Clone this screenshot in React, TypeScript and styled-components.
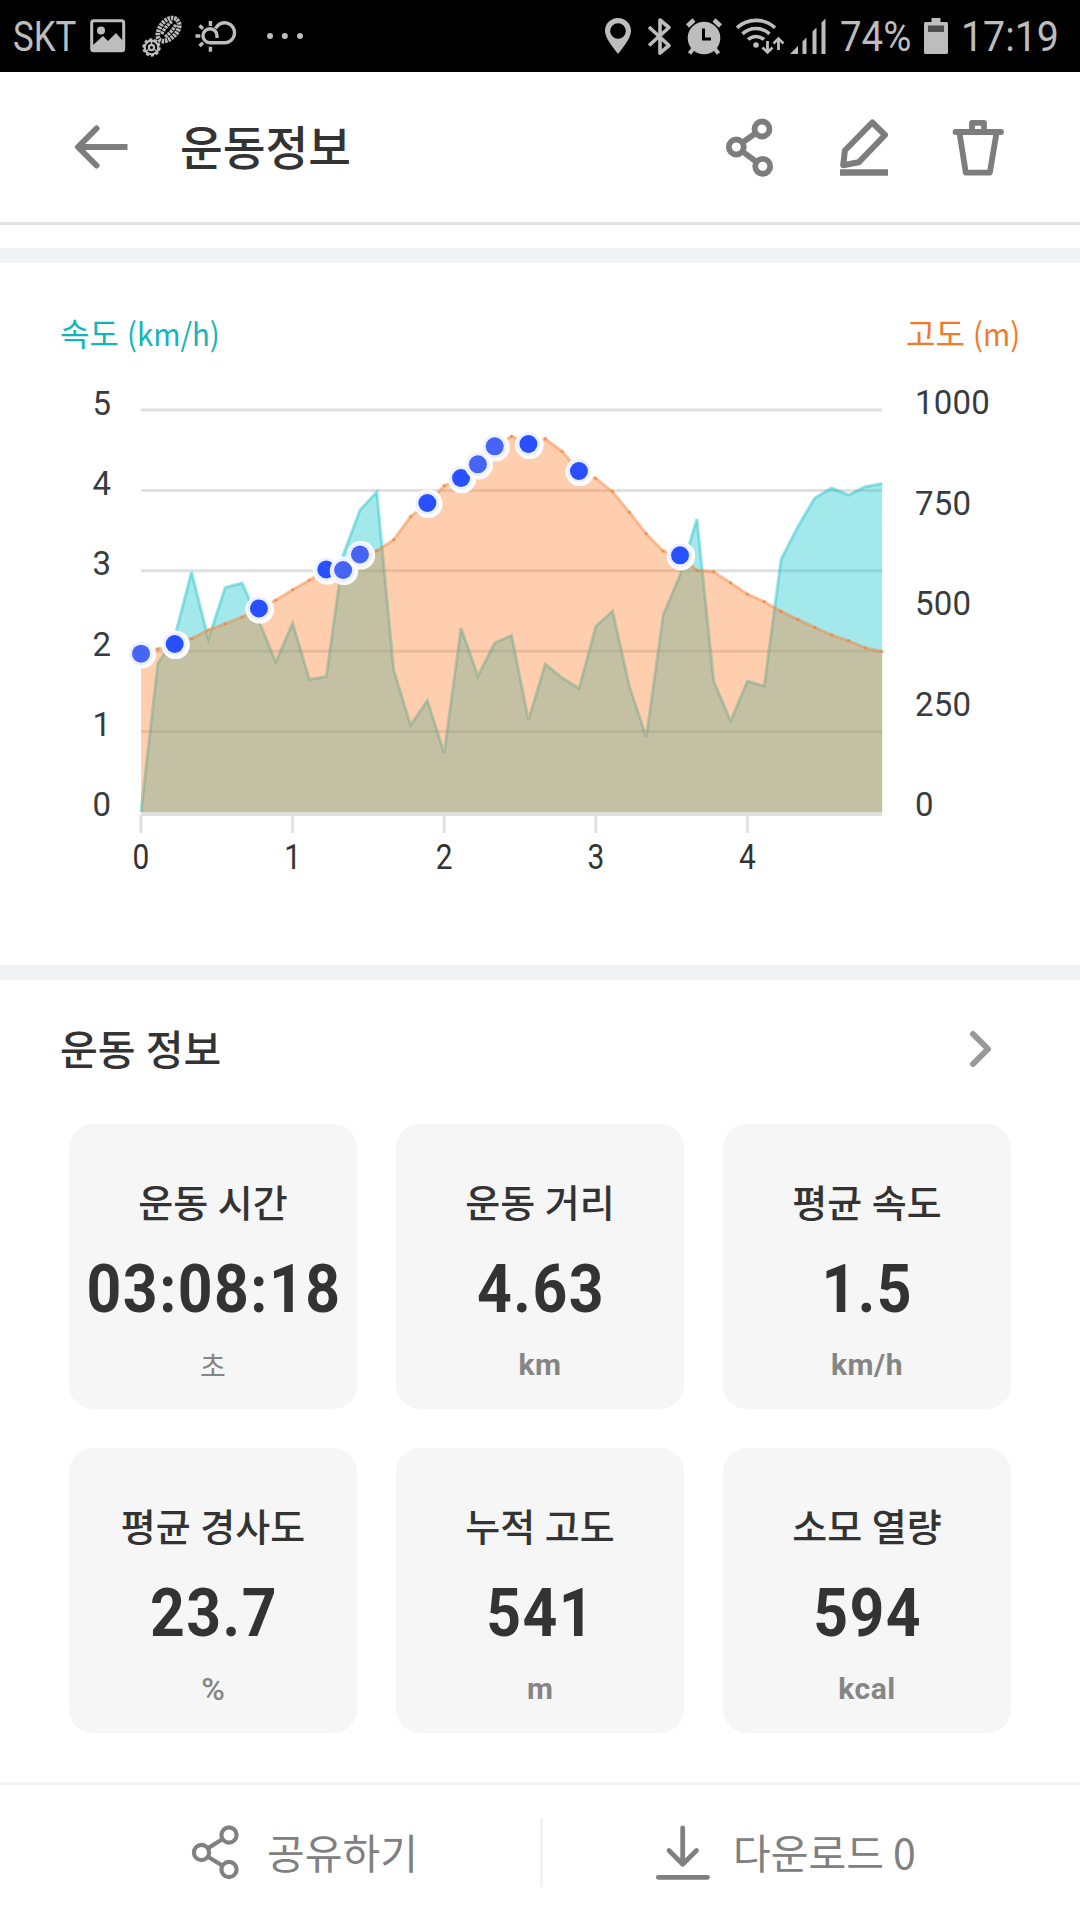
import React from "react";
import styled, { createGlobalStyle } from "styled-components";

const KR = '"Noto Sans CJK KR", "Noto Sans", sans-serif';
const ROBOTO = 'Roboto, "Noto Sans CJK KR", sans-serif';

const GlobalStyle = createGlobalStyle`
  * { box-sizing: border-box; }
  body { margin: 0; background: #fff; font-family: ${KR}; color: #333; }
  svg { display: block; flex: none; overflow: visible; }
`;

const Screen = styled.div`
  width: 1080px;
  height: 1920px;
  display: flex;
  flex-direction: column;
  overflow: hidden;
  background: #fff;
`;

/* ---------- status bar ---------- */

const StatusBar = styled.div`
  height: 72px;
  flex: none;
  display: flex;
  align-items: center;
  justify-content: space-between;
  padding: 0 22px 0 13px;
  background: #000;
  color: #bdbdbd;
`;

const StatusGroup = styled.div`
  display: flex;
  align-items: center;
  height: 72px;
`;

const StatusText = styled.span<{ $w: number; $scale: number }>`
  display: block;
  width: ${(p) => p.$w}px;
  padding-top: 2px;
  font: 400 42px/72px ${ROBOTO};
  white-space: nowrap;
  transform: scaleX(${(p) => p.$scale});
  transform-origin: left center;
`;

const Space = styled.span<{ $w: number }>`
  flex: none;
  width: ${(p) => p.$w}px;
`;

/* ---------- header ---------- */

const Header = styled.header`
  height: 153px;
  flex: none;
  display: flex;
  align-items: center;
  padding: 0 76px 0 75px;
  border-bottom: 3px solid #e2e2e2;
`;

const Title = styled.h1`
  margin: 0 auto 0 52px;
  padding-bottom: 4px;
  font: 500 46.5px/60px ${KR};
`;

const HeaderActions = styled.div`
  display: flex;
  align-items: center;
  gap: 65px;
`;

const Band = styled.div<{ $top?: number }>`
  height: 15px;
  flex: none;
  margin-top: ${(p) => p.$top ?? 0}px;
  background: #f1f2f4;
`;

/* ---------- chart ---------- */

const ChartSection = styled.section`
  height: 702px;
  flex: none;
  padding-top: 45px;
`;

const Legend = styled.div`
  height: 49px;
  display: flex;
  justify-content: space-between;
  padding: 0 60px 0 60px;
`;

const LegendLabel = styled.span<{ $color: string }>`
  display: flex;
  gap: 8px;
  font: 400 32px/48px ${KR};
  color: ${(p) => p.$color};
`;

const LegendUnit = styled.span<{ $w: number }>`
  width: ${(p) => p.$w}px;
  white-space: nowrap;
  transform: scaleX(0.92);
  transform-origin: left center;
`;

const AxisText = styled.text`
  font: 400 33px ${ROBOTO};
  fill: #373c40;
`;

const DistanceText = styled.text`
  font: 400 36px ${ROBOTO};
  fill: #333;
  text-anchor: middle;
`;

/* ---------- summary ---------- */

const SectionHead = styled.div`
  height: 144px;
  flex: none;
  display: flex;
  align-items: center;
  justify-content: space-between;
  padding: 0 88px 6px 60px;
`;

const SectionTitle = styled.h2`
  margin: 0;
  padding-bottom: 4px;
  font: 500 41px/56px ${KR};
  word-spacing: 1px;
`;

const CardGrid = styled.div`
  display: grid;
  grid-template-columns: repeat(3, 288px);
  grid-auto-rows: 285px;
  gap: 39px;
  padding: 0 69px;
`;

const Card = styled.div`
  display: flex;
  flex-direction: column;
  align-items: center;
  padding-top: 49px;
  border-radius: 24px;
  background: #f6f6f6;
`;

const CardLabel = styled.div`
  font: 500 38px/56px ${KR};
  word-spacing: 1px;
  white-space: nowrap;
`;

const CardValue = styled.div`
  margin-top: 21px;
  padding-left: 1.5px;
  font: 700 66px/80px ${ROBOTO};
  letter-spacing: 1.6px;
  white-space: nowrap;
  transform: scaleX(0.92);
`;

const CardUnit = styled.div<{ $unit: string }>`
  margin-top: 15px;
  font: ${(p) => (p.$unit === "초" ? `400 28px/40px ${KR}` : `700 30px/40px ${ROBOTO}`)};
  font-weight: ${(p) => (p.$unit === "초" ? 400 : p.$unit === "%" ? 500 : 700)};
  font-size: ${(p) => (p.$unit === "초" ? 28 : p.$unit === "%" ? 32 : 30)}px;
  color: #858585;
  letter-spacing: ${(p) => (p.$unit.length > 1 ? 0.5 : 0)}px;
`;

/* ---------- footer ---------- */

const Footer = styled.footer`
  height: 138px;
  flex: none;
  margin-top: 49px;
  display: flex;
  align-items: center;
  border-top: 3px solid #f1f2f2;
  color: #808080;
`;

const FooterButton = styled.div<{ $left: number; $width: number; $gap: number }>`
  width: ${(p) => p.$width}px;
  padding-left: ${(p) => p.$left}px;
  display: flex;
  align-items: center;
  gap: ${(p) => p.$gap}px;
  font: 400 41px/60px ${KR};
  white-space: nowrap;
`;

const FooterText = styled.span`
  padding-bottom: 4px;
`;

const Divider = styled.div`
  width: 3px;
  height: 69px;
  background: #f1f2f4;
`;

/* ---------- icons ---------- */

const FG = "#bdbdbd";

const PictureIcon = () => (
  <svg width="36" height="34" viewBox="0 0 36 34">
    <rect x="1.7" y="1.7" width="32" height="30" rx="2" fill="none" stroke={FG} strokeWidth="3" />
    <circle cx="11" cy="11.5" r="4" fill={FG} />
    <path d="M3 26 L13 17 L18 22 L26 14 L33 22 V31 H3Z" fill={FG} />
  </svg>
);

const BootIcon = () => (
  <svg width="41" height="41" viewBox="0 0 41 41" fill="none" stroke={FG}>
    <g transform="rotate(40 26 14)">
      <path
        d="M26 0.500C31.500 0.500 34.500 6 34.500 12C34.500 19 31 27 26 27C21 27 17.500 19 17.500 12C17.500 6 20.500 0.500 26 0.500Z"
        strokeWidth="4.600"
        strokeDasharray="2.400 0.900"
      />
      <path d="M23.500 5Q21.500 13 24 22M28.500 5Q30.500 13 28 22" strokeWidth="3.400" strokeDasharray="2.600 0.800" />
    </g>
    <circle cx="9.500" cy="31.500" r="6.800" strokeWidth="2.200" />
    <circle cx="9.500" cy="31.500" r="8.300" strokeWidth="1.800" strokeDasharray="3.200 2" />
    <circle cx="9.500" cy="31.500" r="2.600" strokeWidth="2.200" />
    <path d="M9.500 25V28M12.500 33.500l3 2M6.500 33.500l-3 2" strokeWidth="1.400" />
  </svg>
);

const WeatherIcon = () => (
  <svg width="42" height="32" viewBox="0 0 42 32" fill="none" stroke={FG} strokeWidth="3.400">
    <path d="M20.500 8.500A10 10 0 1 1 29.800 22.700H15A7 7 0 1 1 22 15.700V18" />
    <path d="M15.400 1V6M15.400 26.700V31.700M0.500 16H5.300M4.500 5.500L8 8.700M4.500 26L8 22.800" />
  </svg>
);

const MoreIcon = () => (
  <svg width="38" height="8" viewBox="0 0 38 8" fill={FG}>
    <circle cx="4" cy="4" r="3" />
    <circle cx="18.8" cy="4" r="3" />
    <circle cx="34" cy="4" r="3" />
  </svg>
);

const PinIcon = () => (
  <svg width="26" height="36" viewBox="0 0 26 36">
    <path
      fillRule="evenodd"
      fill={FG}
      d="M13 0C5.8 0 0 5.6 0 12.8C0 20 7 28 13 36C19 28 26 20 26 12.8C26 5.6 20.200 0 13 0ZM13 5.200a7.800 7.800 0 1 1 0 15.600a7.800 7.800 0 1 1 0-15.600Z"
    />
  </svg>
);

const BluetoothIcon = () => (
  <svg width="23" height="37" viewBox="0 0 23 37" fill="none" stroke={FG} strokeWidth="3.6" strokeLinejoin="round">
    <path d="M1 9 L21 27.500 L12 35 V2 L21 9.500 L1 27.500" />
  </svg>
);

const AlarmIcon = () => (
  <svg width="36" height="37" viewBox="0 0 36 37">
    <circle cx="18" cy="20" r="16.300" fill={FG} />
    <path d="M1.500 8 L8 2M34.500 8 L28 2" stroke={FG} strokeWidth="4.500" />
    <path d="M7 31L3.500 35.500M29 31l3.500 4.500" stroke={FG} strokeWidth="4" />
    <path d="M17.500 10.500V21H25" fill="none" stroke="#000" strokeWidth="3" />
  </svg>
);

const WifiIcon = () => (
  <svg width="48" height="37" viewBox="0 0 48 37" fill="none" stroke={FG} strokeWidth="3.600">
    <path d="M1 9.800 A28 28 0 0 1 39 9.800M6.500 15.800 A20 20 0 0 1 33.500 15.800M12 21.500 A12 12 0 0 1 28 21.500" />
    <circle cx="20" cy="27" r="2.800" fill={FG} stroke="none" />
    <path d="M31.500 23V34M42.500 32V21.500" strokeWidth="2.800" />
    <path d="M26.500 29.500L31.500 34.500L36.500 29.500M37.500 25.500L42.500 20.500L47.500 25.500" strokeWidth="2.600" />
  </svg>
);

const SignalIcon = () => (
  <svg width="36" height="36" viewBox="0 0 36 36" fill={FG}>
    <path d="M0 36L8 28V36ZM12.500 23.500L16.500 19.500V36H12.500ZM22.500 13.500L26.500 9.500V36H22.500ZM31.500 4.500L35.500 0.500V36H31.500Z" />
  </svg>
);

const BatteryIcon = () => (
  <svg width="24" height="36" viewBox="0 0 24 36">
    <path fill={FG} d="M7.500 0H16.500V4H22.500Q24 4 24 5.500V34.500Q24 36 22.500 36H1.500Q0 36 0 34.500V5.500Q0 4 1.500 4H7.500Z" />
    <rect x="4" y="7.500" width="16" height="6.500" fill="#4d4d4d" />
  </svg>
);

const BackIcon = () => (
  <svg width="53" height="44" viewBox="75 125 53 44" fill="none" stroke="#7d7d7d" strokeWidth="6" strokeLinejoin="round">
    <path d="M78 147H127.500" />
    <path d="M96.500 128.500L78 147L96.500 165.500" strokeLinecap="round" />
  </svg>
);

const HeaderShareIcon = () => (
  <svg width="48" height="60" viewBox="727 117 48 60" fill="none" stroke="#7d7d7d" strokeWidth="5.800">
    <circle cx="762" cy="129" r="7.500" />
    <circle cx="736.300" cy="147" r="7.500" />
    <circle cx="762.700" cy="166.300" r="7.500" />
    <path d="M742.500 142.500L755.800 133.200M742.500 151.500L756.500 161.800" />
  </svg>
);

const EditIcon = () => (
  <svg width="48" height="60" viewBox="840 117 48 60" fill="none" stroke="#7d7d7d" strokeWidth="6" strokeLinejoin="round">
    <path d="M872.300 122.500L885 135L858.700 162.300L843.200 165.200L844.900 150.500Z" />
    <path d="M840 172.500H888" strokeWidth="6.400" />
  </svg>
);

const TrashIcon = () => (
  <svg width="51" height="60" viewBox="953 117 51 60" fill="none" stroke="#7d7d7d" strokeWidth="5.800" strokeLinejoin="round">
    <path d="M955.500 132H1001" strokeLinecap="round" />
    <path d="M972 131V122.800H984V131" />
    <path d="M959.500 133L965.800 172.700H989.800L996.500 133" />
  </svg>
);

const ChevronIcon = () => (
  <svg width="22" height="36" viewBox="0 0 22 36" fill="none" stroke="#999" strokeWidth="6" strokeLinecap="round" strokeLinejoin="round">
    <path d="M3 3L18 18L3 33" />
  </svg>
);

const ShareIcon = () => (
  <svg width="47" height="54" viewBox="192 1826 47 54" fill="none" stroke="#808080" strokeWidth="4.200">
    <circle cx="229" cy="1835" r="7.600" />
    <circle cx="201.500" cy="1852.500" r="7.600" />
    <circle cx="229" cy="1869.500" r="7.600" />
    <path d="M208 1848.300L222.600 1839M208 1856.700L222.600 1865.700" />
  </svg>
);

const DownloadIcon = () => (
  <svg width="54" height="54" viewBox="656 1826 54 54" fill="none" stroke="#808080" strokeWidth="4.800" strokeLinecap="round" strokeLinejoin="round">
    <path d="M682.700 1828V1864M669 1850.500L682.700 1864.300L696.500 1850.500M658.300 1877.300H707.500" />
  </svg>
);

/* ---------- chart data, one sample per ninth of a kilometre ---------- */

const speed = [
  812, 663.7, 637, 572, 639, 587.5, 583, 621, 662, 623, 679.5, 676.6, 555, 510, 492, 670, 725, 700.5, 753, 628, 676,
  643, 635.3, 720, 664, 677.7, 688.5, 626.5, 611, 686.7, 737, 615, 575, 519, 681, 721, 681, 686, 559.3, 526.4,
  498, 488, 495, 486.7, 483.5,
];

const altitude = [
  653.7, 648.9, 644, 638.5, 630, 623.7, 617, 608.5, 600, 589.7, 580, 569.5, 570, 554.5, 550.8, 539.7, 516.5, 503,
  485.7, 478, 464.3, 446.3, 436.3, 444, 438.7, 451.3, 471, 478.3, 491.7, 512.3, 533.7, 551, 555.3, 570.3, 571.7,
  582.7, 594, 601.7, 611.3, 619.3, 627.4, 634.8, 640.7, 647.8, 651.5,
];

const markers: { i: number; soft?: boolean }[] = [
  { i: 0, soft: true },
  { i: 2 },
  { i: 7 },
  { i: 11 },
  { i: 12, soft: true },
  { i: 13, soft: true },
  { i: 17 },
  { i: 19 },
  { i: 20, soft: true },
  { i: 21, soft: true },
  { i: 23 },
  { i: 26 },
  { i: 32 },
];

const BASE = 812;
const LEFT = 141;
const KM = 151.6;
const xAt = (i: number) => LEFT + (i * KM) / 9;
const toLine = (ys: number[]) => ys.map((y, i) => `${xAt(i).toFixed(1)},${y}`).join(" ");
const RIGHT = xAt(speed.length - 1);
const toArea = (ys: number[]) => `${LEFT},${BASE} ${toLine(ys)} ${RIGHT},${BASE}`;

const Chart = () => (
  <svg width="1080" height="608" viewBox="0 357 1080 608">
    {[0, 1, 2, 3, 4, 5].map((n) => {
      const y = n === 0 ? 814 : BASE - n * 80.4;
      return <path key={n} d={`M${LEFT} ${y}H${RIGHT}`} stroke="#e0e0e0" strokeWidth={n === 0 ? 4 : 3} />;
    })}
    {[0, 1, 2, 3, 4].map((n) => (
      <path key={n} d={`M${LEFT + n * KM} 815V833`} stroke="#e0e0e0" strokeWidth="3" />
    ))}
    <polygon points={toArea(speed)} fill="rgba(24,200,207,0.4)" />
    <polyline points={toLine(speed)} fill="none" stroke="rgba(24,190,197,0.42)" strokeWidth="3" />
    <polygon points={toArea(altitude)} fill="rgba(255,120,32,0.36)" />
    <polyline points={toLine(altitude)} fill="none" stroke="rgba(245,130,60,0.45)" strokeWidth="3" />
    {altitude.map((y, i) => (
      <circle key={i} cx={xAt(i)} cy={y} r="1.600" fill="rgba(240,120,50,0.6)" />
    ))}
    {markers.map(({ i, soft }) => (
      <g key={i}>
        <circle cx={xAt(i) + 0.9} cy={altitude[i] + 0.8} r="14.300" fill="#fff" opacity={soft ? 0.9 : 1} />
        <circle cx={xAt(i)} cy={altitude[i]} r="11.800" fill="#ebefff" />
        <circle cx={xAt(i)} cy={altitude[i]} r="9" fill={soft ? "#4765f4" : "#2850ff"} />
      </g>
    ))}
    {[5, 4, 3, 2, 1, 0].map((n) => (
      <AxisText key={n} x="111" y={816 - n * 80.2} textAnchor="end">
        {n}
      </AxisText>
    ))}
    {[1000, 750, 500, 250, 0].map((n) => (
      <AxisText key={n} x="915" y={816 - (n / 250) * 100.4} letterSpacing="0.200">
        {n}
      </AxisText>
    ))}
    {[0, 1, 2, 3, 4].map((n) => (
      <DistanceText key={n} transform={`translate(${LEFT + n * KM} 869) scale(0.83 1)`}>
        {n}
      </DistanceText>
    ))}
  </svg>
);

const stats = [
  { label: "운동 시간", value: "03:08:18", unit: "초" },
  { label: "운동 거리", value: "4.63", unit: "km" },
  { label: "평균 속도", value: "1.5", unit: "km/h" },
  { label: "평균 경사도", value: "23.7", unit: "%" },
  { label: "누적 고도", value: "541", unit: "m" },
  { label: "소모 열량", value: "594", unit: "kcal" },
];

export default function App() {
  return (
    <Screen>
      <GlobalStyle />
      <StatusBar>
        <StatusGroup>
          <StatusText $w={77} $scale={0.83}>SKT</StatusText>
          <PictureIcon />
          <Space $w={16} />
          <BootIcon />
          <Space $w={12} />
          <WeatherIcon />
          <Space $w={29} />
          <MoreIcon />
        </StatusGroup>
        <StatusGroup>
          <PinIcon />
          <Space $w={17} />
          <BluetoothIcon />
          <Space $w={15} />
          <AlarmIcon />
          <Space $w={14} />
          <WifiIcon />
          <Space $w={6} />
          <SignalIcon />
          <Space $w={14} />
          <StatusText $w={84} $scale={0.915}>74%</StatusText>
          <BatteryIcon />
          <Space $w={13} />
          <StatusText $w={97} $scale={0.935}>17:19</StatusText>
        </StatusGroup>
      </StatusBar>
      <Header>
        <BackIcon />
        <Title>운동정보</Title>
        <HeaderActions>
          <HeaderShareIcon />
          <EditIcon />
          <TrashIcon />
        </HeaderActions>
      </Header>
      <Band $top={23} />
      <ChartSection>
        <Legend>
          <LegendLabel $color="#13b5b9">
            속도 <LegendUnit $w={92}>(km/h)</LegendUnit>
          </LegendLabel>
          <LegendLabel $color="#f47a2a">
            고도 <LegendUnit $w={47}>(m)</LegendUnit>
          </LegendLabel>
        </Legend>
        <Chart />
      </ChartSection>
      <Band />
      <SectionHead>
        <SectionTitle>운동 정보</SectionTitle>
        <ChevronIcon />
      </SectionHead>
      <CardGrid>
        {stats.map((s) => (
          <Card key={s.label}>
            <CardLabel>{s.label}</CardLabel>
            <CardValue>{s.value}</CardValue>
            <CardUnit $unit={s.unit}>{s.unit}</CardUnit>
          </Card>
        ))}
      </CardGrid>
      <Footer>
        <FooterButton $left={192} $width={540} $gap={28}>
          <ShareIcon />
          <FooterText>공유하기</FooterText>
        </FooterButton>
        <Divider />
        <FooterButton $left={113} $width={537} $gap={23}>
          <DownloadIcon />
          <FooterText>다운로드 0</FooterText>
        </FooterButton>
      </Footer>
    </Screen>
  );
}
